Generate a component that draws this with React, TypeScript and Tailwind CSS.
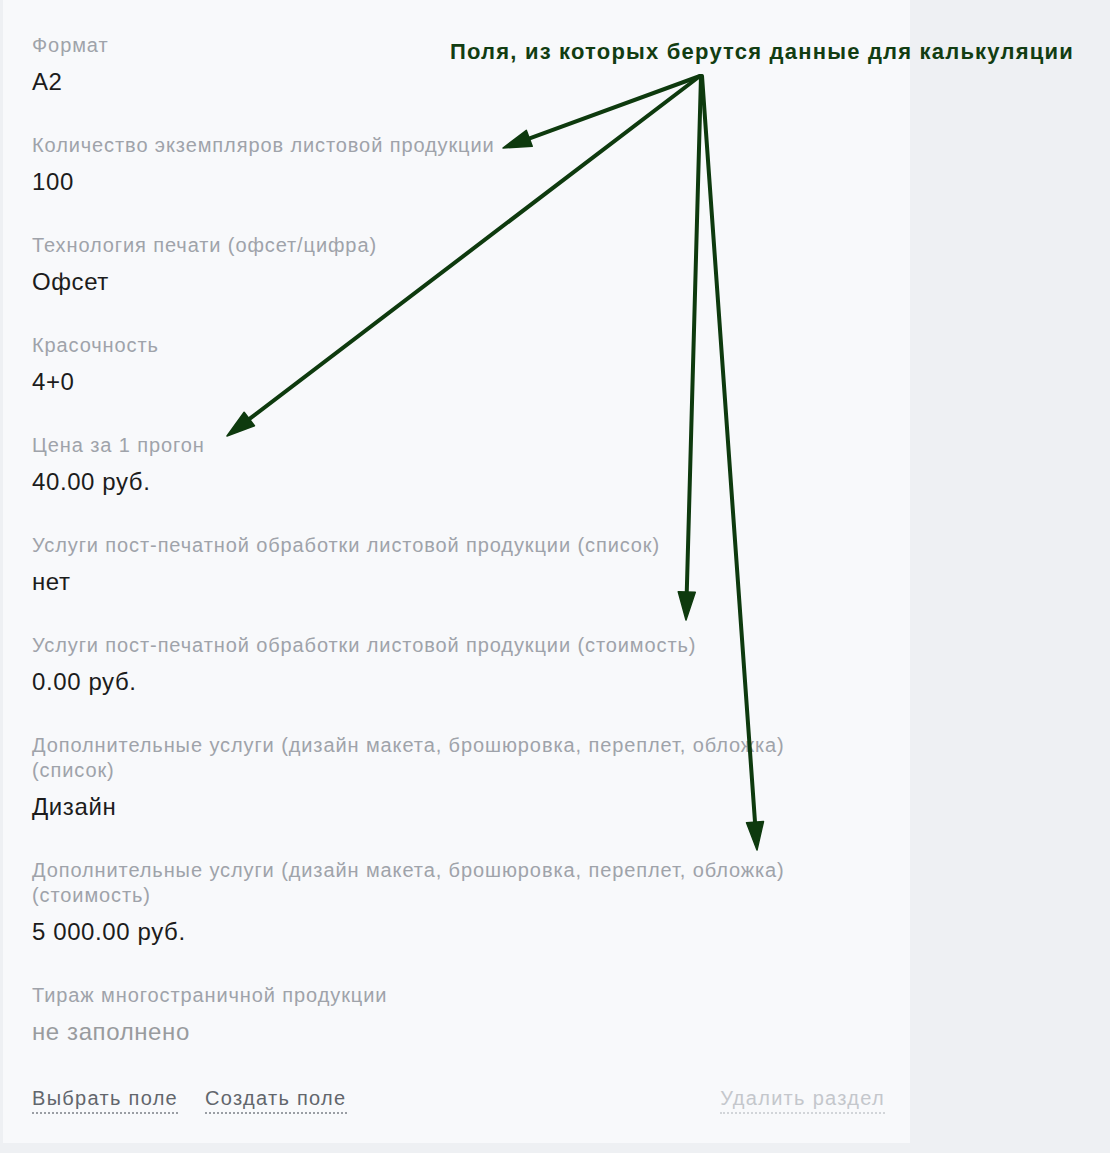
import React from "react";

const fields: { label: string; value: string; empty?: boolean }[] = [
  { label: "Формат", value: "А2" },
  { label: "Количество экземпляров листовой продукции", value: "100" },
  { label: "Технология печати (офсет/цифра)", value: "Офсет" },
  { label: "Красочность", value: "4+0" },
  { label: "Цена за 1 прогон", value: "40.00 руб." },
  { label: "Услуги пост-печатной обработки листовой продукции (список)", value: "нет" },
  { label: "Услуги пост-печатной обработки листовой продукции (стоимость)", value: "0.00 руб." },
  { label: "Дополнительные услуги (дизайн макета, брошюровка, переплет, обложка) (список)", value: "Дизайн" },
  { label: "Дополнительные услуги (дизайн макета, брошюровка, переплет, обложка) (стоимость)", value: "5 000.00 руб." },
  { label: "Тираж многостраничной продукции", value: "не заполнено", empty: true },
];

function Arrow({ x1, y1, x2, y2 }: { x1: number; y1: number; x2: number; y2: number }) {
  const dx = x2 - x1;
  const dy = y2 - y1;
  const len = Math.sqrt(dx * dx + dy * dy);
  const ux = dx / len;
  const uy = dy / len;
  const hl = 28;
  const hw = 8.5;
  const bx = x2 - ux * hl;
  const by = y2 - uy * hl;
  const px = -uy;
  const py = ux;
  const pts = `${x2},${y2} ${bx + px * hw},${by + py * hw} ${bx - px * hw},${by - py * hw}`;
  return (
    <g>
      <line x1={x1} y1={y1} x2={bx + ux * 4} y2={by + uy * 4} stroke="#0e3a0e" strokeWidth={4} strokeLinecap="round" />
      <polygon points={pts} fill="#0e3a0e" stroke="#0e3a0e" strokeWidth={1.5} strokeLinejoin="round" />
    </g>
  );
}

export default function App() {
  return (
    <div className="relative w-[1110px] h-[1153px] bg-[#eef0f3]" style={{ fontFamily: '"Liberation Sans", Arial, sans-serif' }}>
      <div className="ml-[3px] w-[907px] h-[1143px] bg-[#f8f9fb] pt-[33px] pl-[29px] pr-[25px] flex flex-col">
        {fields.map((f, i) => (
          <div key={i} className="mb-[36px]">
            <div className="text-[20px] leading-[25px] text-[#9fa3aa] tracking-[0.9px] max-w-[800px]">{f.label}</div>
            <div className={`mt-[9px] text-[24px] leading-[30px] tracking-[0.6px] ${f.empty ? "text-[#999b9e]" : "text-[#1c1c1c]"}`}>{f.value}</div>
          </div>
        ))}
        <div className="mt-[2px] flex items-start text-[20px] leading-[26px] tracking-[1.3px]">
          <span className="text-[#62666c] border-b-2 border-dotted border-[#9a9ea4] pb-[1px]">Выбрать поле</span>
          <span className="ml-[27px] text-[#62666c] border-b-2 border-dotted border-[#9a9ea4] pb-[1px]">Создать поле</span>
          <span className="ml-auto text-[#c4c7cc] border-b-2 border-dotted border-[#d2d5d9] pb-[1px]">Удалить раздел</span>
        </div>
      </div>
      <div className="absolute left-[450px] top-[38px] text-[22px] leading-[28px] font-bold text-[#123d12] whitespace-nowrap tracking-[1.2px]">
        Поля, из которых берутся данные для калькуляции
      </div>
      <svg className="absolute inset-0 pointer-events-none" width={1110} height={1153}>
        <Arrow x1={700} y1={76} x2={503} y2={148} />
        <Arrow x1={700} y1={76} x2={227} y2={436} />
        <Arrow x1={701} y1={76} x2={686} y2={620} />
        <Arrow x1={702} y1={76} x2={757} y2={850} />
      </svg>
    </div>
  );
}
